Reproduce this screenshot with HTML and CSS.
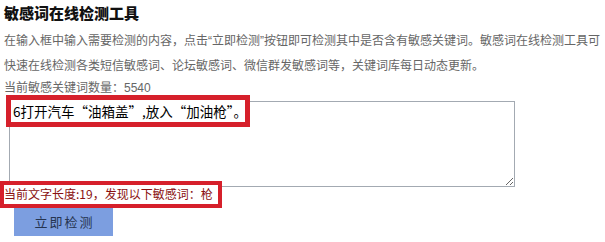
FILE: index.html
```html
<!DOCTYPE html>
<html lang="zh-CN">
<head>
<meta charset="utf-8">
<title>敏感词在线检测工具</title>
<link rel="stylesheet" href="styles.css">
</head>
<body>
<div class="page">
  <h1 class="title">敏感词在线检测工具</h1>
  <p class="desc">在输入框中输入需要检测的内容，点击“立即检测”按钮即可检测其中是否含有敏感关键词。敏感词在线检测工具可快速在线检测各类短信敏感词、论坛敏感词、微信群发敏感词等，关键词库每日动态更新。</p>
  <p class="count">当前敏感关键词数量：5540</p>
  <div class="editor">
    <textarea class="input" aria-label="检测内容"></textarea>
    <div class="mark mark-input">6打开汽车“油箱盖”,放入“加油枪”。</div>
    <div class="mark mark-result">当前文字长度:19，发现以下敏感词：枪</div>
  </div>
  <button class="btn" type="button">立即检测</button>
</div>
</body>
</html>
```
FILE: styles.css
```css
html, body {
  margin: 0;
  padding: 0;
  background: #fff;
}
.page {
  padding: 2px 0 0 4px;
  font-family: "Liberation Sans", "Noto Sans CJK SC", sans-serif;
  color: #666;
  font-size: 12px;
}
.title {
  margin: 0;
  font-family: "Noto Sans CJK SC", sans-serif;
  font-size: 15px;
  line-height: 22px;
  font-weight: 900;
  color: #111;
}
.desc {
  margin: 5px 0 0 0;
  line-height: 25px;
  width: 601px;
}
.count {
  margin: 0;
  line-height: 18px;
}
.editor {
  position: relative;
  margin-top: 4px;
  height: 85px;
}
.input {
  display: block;
  box-sizing: border-box;
  margin: 0 0 0 5px;
  width: 506px;
  height: 86px;
  border: 1px solid #a3aab2;
  background: #fff;
  resize: vertical;
}
.mark {
  position: absolute;
  box-sizing: border-box;
  background: #fff;
  border: 5px solid #d6202b;
  white-space: nowrap;
}
.mark-input {
  left: 2px;
  top: -6px;
  width: 244px;
  height: 32px;
  padding: 1px 0 0 2px;
  font-family: "Noto Sans CJK SC", sans-serif;
  font-size: 13.5px;
  line-height: 20px;
  color: #000;
}
.mark-result {
  left: -4px;
  top: 80px;
  width: 222px;
  height: 27px;
  border-width: 4px;
  padding: 0;
  font-family: "Noto Sans CJK SC", sans-serif;
  font-size: 12px;
  line-height: 18px;
  color: #8a1010;
}
.btn {
  display: block;
  margin: 21px 0 0 10px;
  width: 99px;
  height: 29px;
  border: none;
  background: #7c9ee0;
  color: #26344f;
  font-family: "Noto Sans CJK SC", sans-serif;
  font-size: 13px;
  letter-spacing: 2px;
  padding: 0 0 0 2px;
}
```
